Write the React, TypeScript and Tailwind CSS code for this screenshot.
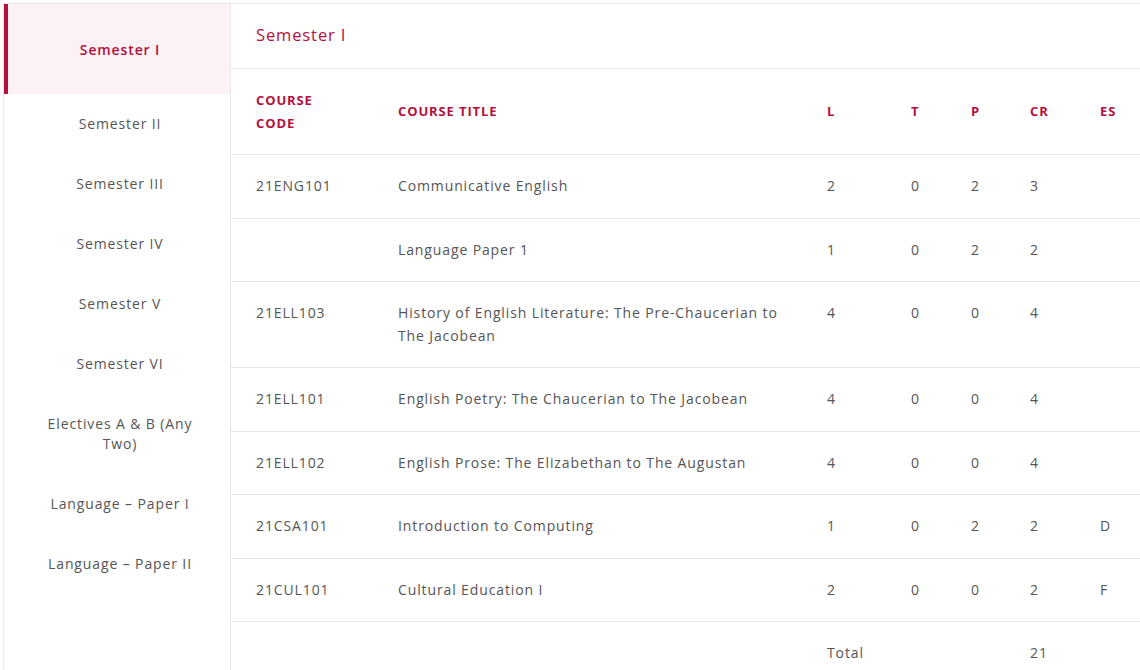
import React from "react";

const items = [
  "Semester I",
  "Semester II",
  "Semester III",
  "Semester IV",
  "Semester V",
  "Semester VI",
  "Electives A & B (Any Two)",
  "Language – Paper I",
  "Language – Paper II",
];

const rows = [
  ["21ENG101", "Communicative English", "2", "0", "2", "3", ""],
  ["", "Language Paper 1", "1", "0", "2", "2", ""],
  ["21ELL103", "History of English Literature: The Pre-Chaucerian to The Jacobean", "4", "0", "0", "4", ""],
  ["21ELL101", "English Poetry: The Chaucerian to The Jacobean", "4", "0", "0", "4", ""],
  ["21ELL102", "English Prose: The Elizabethan to The Augustan", "4", "0", "0", "4", ""],
  ["21CSA101", "Introduction to Computing", "1", "0", "2", "2", "D"],
  ["21CUL101", "Cultural Education I", "2", "0", "0", "2", "F"],
];

const cols = "grid grid-cols-[142px_429px_84px_60px_59px_70px_65px]";

export default function App() {
  return (
    <div
      className="w-[1140px] h-[670px] overflow-hidden bg-white pt-[3px] pl-[3px] tracking-[0.055em]"
      style={{ fontFamily: '"Open Sans", "Noto Sans", sans-serif' }}
    >
      <div className="flex border-t border-l border-[#e7e7e7] h-full">
        <div className="w-[227px] shrink-0 border-r border-[#e7e7e7]">
          {items.map((it, i) =>
            i === 0 ? (
              <div
                key={it}
                className="h-[90px] flex items-center justify-center pl-[2px] bg-[#fcf1f4] border-l-4 border-[#b3103d] text-[14px] font-semibold text-[#b3103d]"
              >
                {it}
              </div>
            ) : (
              <div
                key={it}
                className="py-5 pl-[42px] pr-[36px] text-center text-[14px] leading-5 text-[#555555]"
              >
                {it}
              </div>
            )
          )}
        </div>
        <div className="flex-1 min-w-0">
          <div className="h-[65px] border-b border-[#e7e7e7] flex items-center pl-[25px] pb-[1px] text-[16.5px] text-[#b3103d]">
            Semester I
          </div>
          <div className={`${cols} border-b border-[#e7e7e7] text-[13px] font-bold text-[#b3103d] leading-[23px]`}>
            <div className="px-[25px] pt-5 pb-[19px]">COURSE<br />CODE</div>
            <div className="px-[25px] flex items-center">COURSE TITLE</div>
            <div className="px-[25px] flex items-center">L</div>
            <div className="px-[25px] flex items-center">T</div>
            <div className="px-[25px] flex items-center">P</div>
            <div className="px-[25px] flex items-center">CR</div>
            <div className="px-[25px] flex items-center">ES</div>
          </div>
          {rows.map((r, i) => (
            <div
              key={i}
              className={`${cols} border-b border-[#e7e7e7] text-[14px] leading-[22.5px] text-[#555555]`}
            >
              {r.map((c, j) => (
                <div key={j} className={j === 1 ? "pl-[25px] pr-[10px] py-5" : "px-[25px] py-5"}>
                  {c}
                </div>
              ))}
            </div>
          ))}
          <div className={`${cols} text-[14px] leading-[22.5px] text-[#555555]`}>
            <div className="px-[25px] pt-5"></div>
            <div className="px-[25px] pt-5"></div>
            <div className="px-[25px] pt-5">Total</div>
            <div className="px-[25px] pt-5"></div>
            <div className="px-[25px] pt-5"></div>
            <div className="px-[25px] pt-5">21</div>
            <div className="px-[25px] pt-5"></div>
          </div>
        </div>
      </div>
    </div>
  );
}
